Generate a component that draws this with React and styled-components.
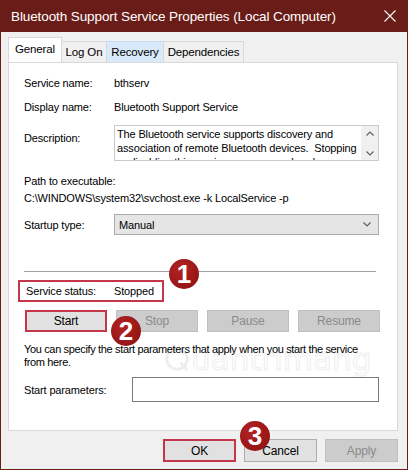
import React from "react";
import styled, { createGlobalStyle, css } from "styled-components";

const Global = createGlobalStyle`
  html, body { margin: 0; padding: 0; background: #ffffff; }
  body { font-family: "Liberation Sans", Arial, sans-serif; }
  * { box-sizing: border-box; }
`;

const UI_FONT = `"Liberation Sans", Arial, sans-serif`;
const MAROON = "#6a1c18";
const MARK = "#c4374b";

const Frame = styled.div`
  position: relative;
  width: 408px;
  height: 470px;
  background: #f0f0f0;
  border: 1px solid ${MAROON};
  border-top: none;
  display: flex;
  flex-direction: column;
  font-family: ${UI_FONT};
  font-size: 11px;
  letter-spacing: -0.15px;
  color: #000;
  overflow: hidden;
`;

const TitleBar = styled.div`
  height: 32px;
  margin: 0 -1px;
  background: ${MAROON};
  color: #fff;
  display: flex;
  align-items: center;
  justify-content: space-between;
  padding: 0 12px 0 11px;
  flex: none;
`;

const Title = styled.span`
  font-size: 13.5px;
  letter-spacing: -0.1px;
`;

const CloseIcon = () => (
  <svg width="12" height="12" viewBox="0 0 12 12">
    <path d="M0.5 0.5 L11.5 11.5 M11.5 0.5 L0.5 11.5" stroke="#fff" strokeWidth="1.1" />
  </svg>
);

const Body = styled.div`
  flex: 1;
  display: flex;
  flex-direction: column;
  padding: 6px 9px 0 7px;
`;

const TabStrip = styled.div`
  display: flex;
  align-items: flex-end;
  height: 24px;
  position: relative;
  z-index: 1;
  font-size: 11.5px;
`;

const Tab = styled.div`
  height: ${(p) => (p.$active ? 25 : 21)}px;
  width: ${(p) => p.$w}px;
  display: flex;
  align-items: center;
  justify-content: center;
  border: 1px solid #d9d9d9;
  border-bottom: none;
  margin-left: -1px;
  background: ${(p) => (p.$active ? "#ffffff" : p.$hover ? "#d8eaf9" : "#f0f0f0")};
  ${(p) => p.$hover && css`border-color: #c5dcf2;`}
  padding-bottom: ${(p) => (p.$active ? 3 : 0)}px;
  &:first-child { margin-left: 0; }
`;

const Panel = styled.div`
  height: 369px;
  background: #fff;
  border: 1px solid #d9d9d9;
  padding: 12px 18px 0 15px;
  display: flex;
  flex-direction: column;
  position: relative;
`;

const FieldRow = styled.div`
  display: grid;
  grid-template-columns: 90px 1fr;
  align-items: ${(p) => p.$align || "center"};
  margin-top: ${(p) => p.$mt || 0}px;
  line-height: 16px;
`;

const Label = styled.span`
  padding-top: ${(p) => p.$pt || 0}px;
`;

const DescBox = styled.div`
  height: 36px;
  border: 1px solid #c9c9c9;
  display: flex;
  overflow: hidden;
`;

const DescText = styled.div`
  flex: 1;
  padding: 1px 0 0 2px;
  line-height: 14px;
`;

const ScrollTrack = styled.div`
  width: 17px;
  flex: none;
  background: #f0f0f0;
  display: flex;
  flex-direction: column;
  align-items: center;
  justify-content: space-between;
  padding: 5px 0 4px;
`;

const Chevron = ({ up }) => (
  <svg width="8" height="5" viewBox="0 0 8 5">
    <path d={up ? "M0.5 4.5 L4 1 L7.5 4.5" : "M0.5 0.5 L4 4 L7.5 0.5"} stroke="#606060" strokeWidth="1.2" fill="none" />
  </svg>
);

const Block = styled.div`
  margin-top: ${(p) => p.$mt || 0}px;
  line-height: ${(p) => p.$lh || 17}px;
`;

const Combo = styled.div`
  height: 21px;
  background: #e5e5e5;
  border: 1px solid #acacac;
  display: flex;
  align-items: center;
  justify-content: space-between;
  padding: 0 7px 0 4px;
`;

const Separator = styled.div`
  height: 1px;
  background: #a0a0a0;
  margin-top: ${(p) => p.$mt}px;
  margin-right: 3px;
`;

const StatusRow = styled.div`
  width: 146px;
  height: 22px;
  margin-top: 8px;
  margin-left: -6px;
  padding-left: 6px;
  border: 2px solid ${MARK};
  display: grid;
  grid-template-columns: 88px 1fr;
  align-items: center;
`;

const ButtonRow = styled.div`
  display: grid;
  grid-template-columns: repeat(4, 82px);
  column-gap: 9px;
  margin-top: 8px;
  margin-left: 1px;
`;

const Button = styled.div`
  height: 22px;
  display: flex;
  align-items: center;
  justify-content: center;
  background: ${(p) => (p.$disabled ? "#cccccc" : "#e1e1e1")};
  color: ${(p) => (p.$disabled ? "#8a8a8a" : "#000")};
  border: ${(p) => (p.$marked ? `2px solid ${MARK}` : `1px solid ${p.$disabled ? "#bfbfbf" : "#adadad"}`)};
  font-size: 12px;
`;

const Note = styled.p`
  margin: 11px 0 0;
  max-width: 340px;
  line-height: 13px;
  letter-spacing: -0.35px;
  position: relative;
  z-index: 1;
`;

const ParamRow = styled.div`
  display: grid;
  grid-template-columns: 108px 1fr;
  align-items: center;
  margin-top: 8px;
`;

const TextInput = styled.div`
  height: 25px;
  border: 1px solid #7a7a7a;
  background: #fff;
`;

const Footer = styled.div`
  display: flex;
  justify-content: flex-end;
  gap: 8px;
  margin-top: 8px;
`;

const FooterButton = styled(Button)`
  width: 73px;
  height: 23px;
`;

const Badge = styled.div`
  position: absolute;
  left: ${(p) => p.$x - 15}px;
  top: ${(p) => p.$y - 15}px;
  width: 30px;
  height: 30px;
  border-radius: 50%;
  background: radial-gradient(circle at 40% 35%, #b42222 0%, #961616 70%, #7d1010 100%);
  color: #fff;
  font-family: "Liberation Sans", Arial, sans-serif;
  font-weight: bold;
  font-size: 26px;
  letter-spacing: 0;
  line-height: 30px;
  text-align: center;
  z-index: 5;
`;

const Watermark = styled.div`
  position: absolute;
  left: 163px;
  top: 341px;
  display: flex;
  align-items: center;
  gap: 1px;
  font-family: "DejaVu Sans", sans-serif;
  font-size: 31px;
  letter-spacing: 0;
  color: transparent;
  -webkit-text-stroke: 1px #efefef;
  pointer-events: none;
  z-index: 0;
`;

const WatermarkLogo = () => (
  <svg width="26" height="26" viewBox="0 0 28 28">
    <circle cx="14" cy="14" r="11" fill="none" stroke="#ededed" strokeWidth="3" />
    <path d="M18 18 L25 26" stroke="#ededed" strokeWidth="3" />
  </svg>
);

export default function App() {
  return (
    <>
      <Global />
      <Frame>
        <TitleBar>
          <Title>Bluetooth Support Service Properties (Local Computer)</Title>
          <CloseIcon />
        </TitleBar>
        <Body>
          <TabStrip>
            <Tab $active $w={54}>General</Tab>
            <Tab $w={46}>Log On</Tab>
            <Tab $hover $w={58}>Recovery</Tab>
            <Tab $w={81}>Dependencies</Tab>
          </TabStrip>
          <Panel>
            <FieldRow>
              <span>Service name:</span>
              <span>bthserv</span>
            </FieldRow>
            <FieldRow $mt={8}>
              <span>Display name:</span>
              <span>Bluetooth Support Service</span>
            </FieldRow>
            <FieldRow $mt={10} $align="start">
              <Label $pt={5}>Description:</Label>
              <DescBox>
                <DescText>
                  The Bluetooth service supports discovery and association of remote Bluetooth devices.&nbsp; Stopping or disabling this service may cause already installed
                </DescText>
                <ScrollTrack>
                  <Chevron up />
                  <Chevron />
                </ScrollTrack>
              </DescBox>
            </FieldRow>
            <Block $mt={12}>
              <div>Path to executable:</div>
              <div>C:\WINDOWS\system32\svchost.exe -k LocalService -p</div>
            </Block>
            <FieldRow $mt={7}>
              <span>Startup type:</span>
              <Combo>
                <span>Manual</span>
                <Chevron />
              </Combo>
            </FieldRow>
            <Separator $mt={36} />
            <StatusRow>
              <span>Service status:</span>
              <span>Stopped</span>
            </StatusRow>
            <ButtonRow>
              <Button $marked>Start</Button>
              <Button $disabled>Stop</Button>
              <Button $disabled>Pause</Button>
              <Button $disabled>Resume</Button>
            </ButtonRow>
            <Note>
              You can specify the start parameters that apply when you start the service from here.
            </Note>
            <ParamRow>
              <span>Start parameters:</span>
              <TextInput />
            </ParamRow>
          </Panel>
          <Footer>
            <FooterButton $marked>OK</FooterButton>
            <FooterButton>Cancel</FooterButton>
            <FooterButton $disabled>Apply</FooterButton>
          </Footer>
        </Body>
        <Watermark>
          <WatermarkLogo />
          <span>uantrimang</span>
        </Watermark>
        <Badge $x={183} $y={274}>1</Badge>
        <Badge $x={125} $y={331}>2</Badge>
        <Badge $x={254} $y={436}>3</Badge>
      </Frame>
    </>
  );
}
